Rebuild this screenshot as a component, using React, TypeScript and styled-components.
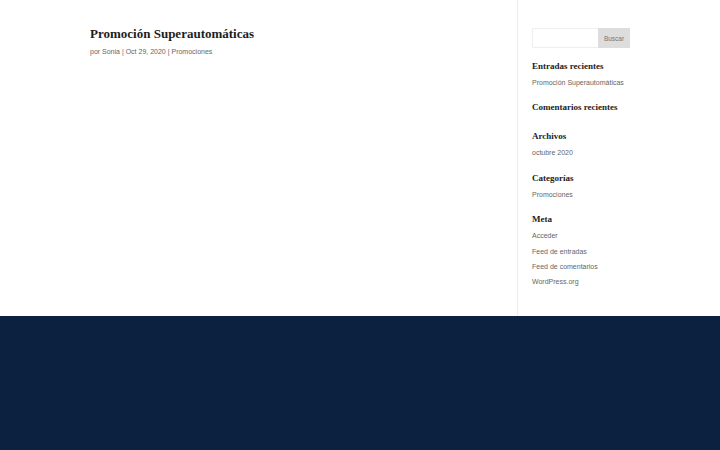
import styled, { createGlobalStyle } from "styled-components"

const GlobalStyle = createGlobalStyle`
    html, body {
        margin : 0;
        padding : 0;
        background : #ffffff;
    }
    body {
        font-family : "Liberation Sans", Arial, sans-serif;
    }
`

type WidgetData = { title: string, links: string[] }

const widgets: WidgetData[] = [
    { title: "Entradas recientes", links: ["Promoción Superautomáticas"] },
    { title: "Comentarios recientes", links: [] },
    { title: "Archivos", links: ["octubre 2020"] },
    { title: "Categorías", links: ["Promociones"] },
    { title: "Meta", links: ["Acceder", "Feed de entradas", "Feed de comentarios", "WordPress.org"] },
]

function App() {
    return (
        <>
            <GlobalStyle />
            <MainSection>
                <ContentColumn>
                    <PostTitle>Promoción Superautomáticas</PostTitle>
                    <PostMeta>
                        por <MetaLink>Sonia</MetaLink> | Oct 29, 2020 | <MetaLink>Promociones</MetaLink>
                    </PostMeta>
                </ContentColumn>
                <Sidebar>
                    <SearchForm onSubmit={e => e.preventDefault()}>
                        <SearchInput type="text" aria-label="Buscar" />
                        <SearchButton type="submit">Buscar</SearchButton>
                    </SearchForm>
                    {widgets.map(w => (
                        <Widget key={w.title} $empty={w.links.length === 0}>
                            <WidgetTitle>{w.title}</WidgetTitle>
                            {w.links.map(l => <WidgetLink key={l}>{l}</WidgetLink>)}
                        </Widget>
                    ))}
                </Sidebar>
            </MainSection>
            <Footer />
        </>
    )
}

export default App


const MainSection = styled.div`
    display : flex;
    height : 316px;
    padding-left : 90px;
    box-sizing : border-box;
`

const ContentColumn = styled.div`
    width : 427px;
    padding-top : 25px;
`

const PostTitle = styled.h1`
    margin : 0;
    font-family : "Liberation Serif", "Times New Roman", serif;
    font-weight : 700;
    font-size : 13px;
    line-height : 17px;
    color : #1d1d1d;
`

const PostMeta = styled.div`
    margin-top : 5px;
    font-size : 7px;
    line-height : 10px;
    color : #666666;
`

const MetaLink = styled.span`
    color : #666666;
`

const Sidebar = styled.div`
    border-left : 1px solid #ececec;
    padding : 28px 0 0 14px;
    width : 98px;
    display : flex;
    flex-direction : column;
`

const SearchForm = styled.form`
    display : flex;
    height : 20px;
    margin : 0 0 12px 0;
`

const SearchInput = styled.input`
    flex : 1;
    min-width : 0;
    margin : 0;
    border : 1px solid #eeeeee;
    border-right : 0;
    border-radius : 2px 0 0 2px;
    padding : 0;
    background : #ffffff;
`

const SearchButton = styled.button`
    width : 32px;
    margin : 0;
    padding : 0;
    border : 0;
    background : #dddddd;
    color : #777777;
    font-family : "Liberation Sans", Arial, sans-serif;
    font-size : 6.5px;
`

const Widget = styled.div<{ $empty?: boolean }>`
    display : flex;
    flex-direction : column;
    margin-bottom : ${p => p.$empty ? "14px" : "11px"};
`

const WidgetTitle = styled.h4`
    margin : 0 0 2px 0;
    font-family : "Liberation Serif", "Times New Roman", serif;
    font-weight : 700;
    font-size : 9px;
    line-height : 13px;
    color : #1d1d1d;
    white-space : nowrap;
`

const WidgetLink = styled.span`
    font-size : 7px;
    line-height : 15.4px;
    color : #666666;
    white-space : nowrap;
`

const Footer = styled.footer`
    height : 134px;
    background : #0c2040;
`
